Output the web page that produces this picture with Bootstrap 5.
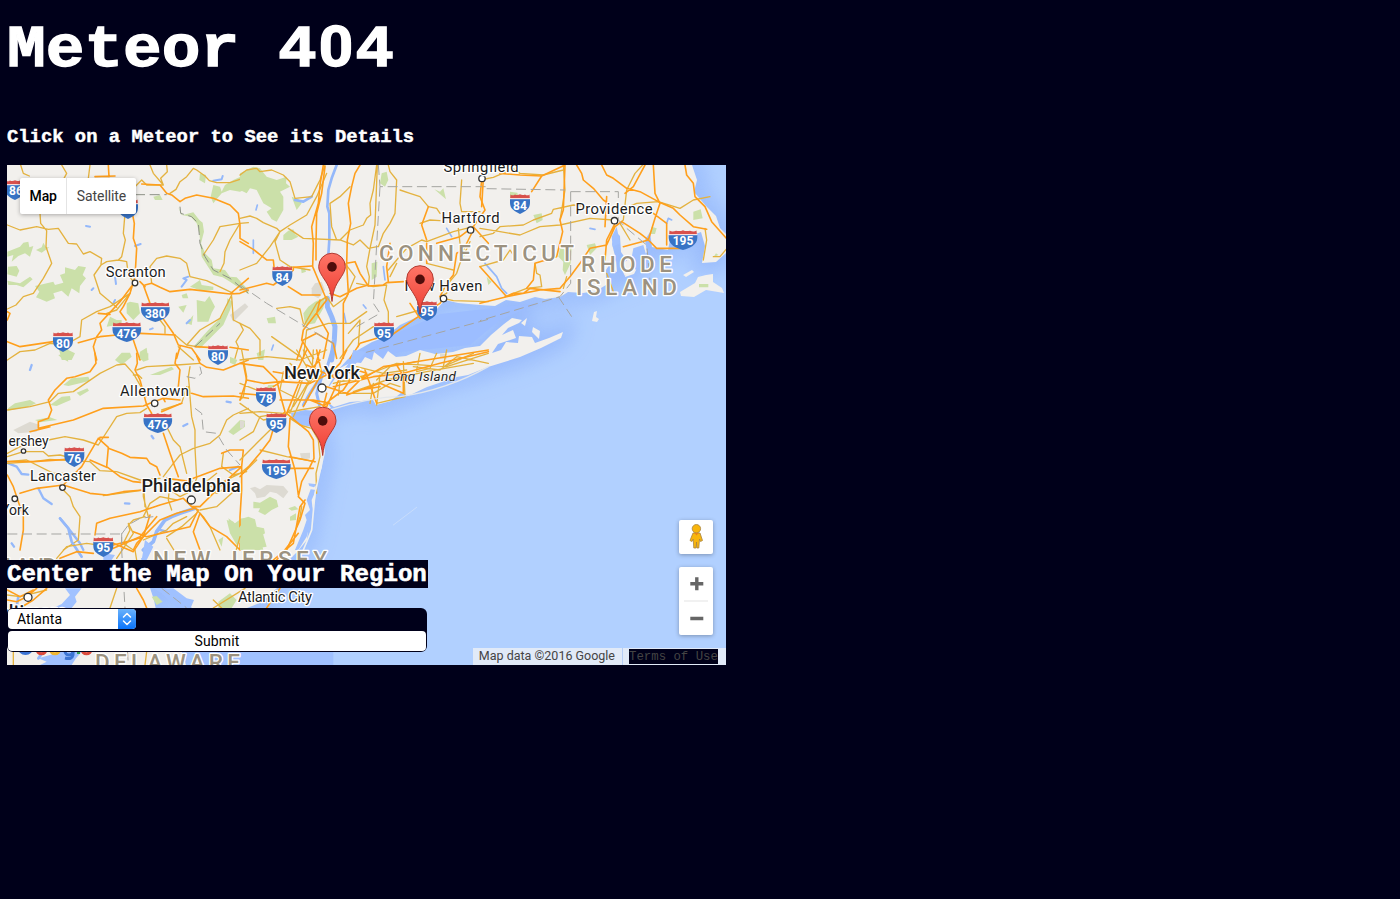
<!DOCTYPE html>
<html lang="en">
<head>
<meta charset="utf-8">
<meta name="viewport" content="width=device-width, initial-scale=1">
<title>Meteor 404</title>
<link rel="stylesheet" href="https://cdn.jsdelivr.net/npm/bootstrap@5.3.0/dist/css/bootstrap.min.css">
<style>
  body { background:#00001a; color:#fff; font-family:"Liberation Mono","Courier New",monospace; padding:0 7px; overflow:hidden; }
  h1 { font-size:64.5px; line-height:72px; padding-top:14px; margin:0; -webkit-text-stroke:1.4px #fff; transform:scaleY(.91); transform-origin:0 61px; }
  h1 .zero { display:inline-block; width:38.7px; text-align:center; font-family:Roboto,sans-serif; font-size:60px; line-height:1; }
  h3 { font-size:18.85px; line-height:22px; margin:40px 0 17px; -webkit-text-stroke:.45px #fff; }
  h1, h3, h2 { font-weight:700; white-space:nowrap; }
  .map-box { width:719px; height:500px; font-family:Roboto,sans-serif; overflow:hidden; background:#b0cfff; }
  .map-art { display:block; width:719px; height:500px; }
  .map-type { top:13px; left:13px; height:36px; font-size:14px; border-radius:2px; box-shadow:0 1px 4px rgba(0,0,0,.3); background:#fff; }
  .map-type button { border:0; background:none; padding:0 9.5px; color:#444; letter-spacing:-.1px; }
  .map-type .on { color:#000; font-weight:500; border-right:1px solid #e4e4e4; }
  .ctl { background:#fff; width:34px; right:13px; border-radius:2px; box-shadow:0 1px 4px rgba(0,0,0,.3); }
  .ctl svg { display:block; }
  .man { top:355px; height:34px; } .zoomer { top:402px; height:68px; }
  .credit { right:0; bottom:0; height:17px; font-size:12.5px; color:#444; line-height:16px; }
  .credit span { background:rgba(245,245,245,.7); padding:0 7px 0 6px; }
  .credit .terms { border-left:1px solid #b5cdf5; padding:1px 8px 0 6px; }
  .terms a { display:block; background:#00001a; color:#444; font:12.35px/16px "Liberation Mono",monospace; text-decoration:none; height:15px; width:89px; white-space:nowrap; }
  .region { left:0; top:395px; width:421px; }
  .region h2 { background:#00001a; font-family:"Liberation Mono","Courier New",monospace; font-size:24.13px; line-height:28px; height:28px; margin:0 0 20px; padding-top:1px; -webkit-text-stroke:.6px #fff; }
  .region form { background:#00001a; width:420px; height:44px; border-radius:6px; padding:1px; color:#000; font:14px/20px Roboto,sans-serif; }
  .city { width:128px; height:20px; border-radius:4px; background:#fff; border:0; text-align:left; padding:0 0 0 9px; color:#000; overflow:hidden; letter-spacing:.1px; }
  .city svg { width:18px; height:20px; background:linear-gradient(#6ab2fb,#0a74fb); }
  .send { width:418px; height:20px; margin-top:2px; border:0; border-radius:4px; background:#fff; color:#000; letter-spacing:.1px; }
  .r path { fill:none; stroke-linejoin:round; stroke-linecap:round; }
  .r .m { stroke:#ff9f1c; stroke-width:4.8; }
  .r .s { stroke:#e4b23f; stroke-width:4; }
  .r .d { stroke:#a5a5a2; stroke-width:3; stroke-dasharray:30 14; stroke-linecap:butt; }
  .r .p { fill:#cbe0a9; } .r .w { fill:#a0c1ff; } .r .g { fill:#dddad2; } .r .l { fill:#f2f0ed; }
  .riv { stroke:#94b8fa; }
  .lbl text { font-size:14.8px; fill:#1d1d1d; text-anchor:middle; paint-order:stroke; stroke:#fff; stroke-width:2.6px; stroke-linejoin:round; }
  .lbl .big { font-size:18.3px; font-weight:500; }
  .lbl .st { font-size:22.5px; fill:#9c9280; font-weight:500; text-anchor:start; }
  .lbl circle { fill:#fff; stroke:#333; stroke-width:1.3; }
  .sh text { font-size:12px; font-weight:700; fill:#fff; text-anchor:middle; }
</style>
<script src="https://cdn.jsdelivr.net/npm/bootstrap@5.3.0/dist/js/bootstrap.bundle.min.js"></script>
</head>
<body>
<h1>Meteor 4<span class="zero">0</span>4</h1>
<h3>Click on a Meteor to See its Details</h3>
<main class="map-box position-relative">
<svg class="map-art" viewBox="7 165 719 500">
  <defs>
    <filter id="soft" x="-20%" y="-20%" width="140%" height="140%"><feGaussianBlur stdDeviation="10"/></filter>
    <linearGradient id="pinFill" x1="0" y1="0" x2="0" y2="1"><stop offset="0" stop-color="#fd7567"/><stop offset="1" stop-color="#ee3d32"/></linearGradient>
    <g id="pin"><path d="M0 0C-1.4-14-5-18-9.5-25C-12-29-13.3-31.500-13.300-35A13.300 13.300 0 0 1 13.300-35C13.300-31.500 12-29 9.500-25C5-18 1.400-14 0 0Z" fill="url(#pinFill)" stroke="#b23a30" stroke-width="1"/><circle cy="-34.600" r="4.800" fill="#4f0d0b"/></g>
    <g id="sn"><path d="M-9.500-9.500Q-7.500-7.800-5-9.500Q-2.500-8.300 0-9.800Q2.500-8.300 5-9.500Q7.500-7.800 9.500-9.500L9.900-4.500H-9.900Z" fill="#d8504c"/><path d="M-10-5H10V-1C10 5 5 7.500 0 10C-5 7.500-10 5-10-1Z" fill="#3873c5"/><path d="M-10-5.300H10" stroke="#fff" stroke-width="1"/></g>
    <g id="sw"><path d="M-13.500-9.500Q-11-7.800-7-9.300Q-3-8.300 0-9.800Q3-8.300 7-9.300Q11-7.800 13.500-9.500L14-4.500H-14Z" fill="#d8504c"/><path d="M-14.300-5H14.300V-2C14 5 7 8 0 10C-7 8-14 5-14.300-2Z" fill="#3873c5"/><path d="M-14.300-5.300H14.300" stroke="#fff" stroke-width="1"/></g>
    <path id="main" d="M7 165H692L697 180L694 192L706 206L716 216L720 228L726 234V253L716 262L702 263L705 246L701 232L690 236L670 240L668 250L652 247L650 232L645 240L647 252L640 262L634 274L625 277L628 262L621 252L620 236L616 232L612 244L615 256L606 270L606 285L596 291L583 293L568 292L560 297L545 299L535 297L520 302L506 300L495 306L480 305L458 303L445 300L436 310L415 318L400 325L385 337L372 342L358 350L347 360L338 370L329 385L326 400L331 408L318 411L305 410L291 413L292 420L301 425L314 427L318 430L319 436L323 450L322 467L317 482L315 500L309 520L307 540L297 552L289 560L281 572L277 588L262 602L247 608L240 625L225 635L215 640L200 622L192 608L183 599L170 590L157 585L150 573L143 558L141 558L148 582L154 600L158 620L168 640L182 652L186 665H7Z"/>
    <path id="li" d="M326 391L334 380L340 368L352 362L361 363L365 357L372 360L374 352L383 359L388 351L396 357L406 356L420 350L435 354L453 352L465 348L480 346L491 335L504 324L512 318L522 320L519 323L508 328L502 335L513 330L516 338L498 344L492 353L501 350L506 342L518 343L519 336L532 337L535 343L549 338L563 332L561 338L541 348L520 357L488 367L468 375L457 377L427 387L408 396L402 392L391 401L376 405L373 400L350 402L334 407L326 401Z"/>
  </defs>
  <rect x="7" y="165" width="719" height="500" fill="#b1d0ff"/>
  <g filter="url(#soft)" fill="none" stroke="#93b5fb" stroke-width="18" opacity=".8"><use href="#main"/><use href="#li"/></g>
  <path d="M340 370L372 344L440 314L540 303L500 320L470 345L400 352L350 366Z" fill="#9cbdff"/>
  <g fill="#f2f0ed"><use href="#main"/><use href="#li"/>
    <path d="M680 292L695 283L698 277L706 275L713 274L713 282L722 288L724 293L706 290L694 297L681 296Z"/><path d="M683 275L692 270L694 272L686 277ZM612 270L616 260L617 272ZM620 266L630 258L632 268L625 276ZM594 312L597 311L596 317L599 319L597 322L592 321ZM533 327L540 331L539 339L532 332ZM521 323L527 318L525 326Z"/>
  </g>

  <g transform="translate(0 160) scale(.33333)" class="r">
    <path class="p" d="M22 275L60 260L70 248L85 245L88 262L100 258L90 290L75 280L55 288L35 305L40 285L22 290ZM108 270L125 262L130 248L138 262L148 262L125 278ZM24 320L50 318L58 332L50 350L22 343ZM22 362L60 370L90 350L98 358L70 382L50 375L25 375ZM105 378L160 365L165 375L190 368L180 345L195 340V322L225 330L235 318L258 322L248 345L258 355L240 378L238 400L215 385L205 410L185 392L160 400L165 415L140 425L108 412L118 395ZM380 430L390 425L415 430L420 460L400 480L380 460ZM330 470L350 480L365 480V510L350 495L320 500ZM590 420L615 425L628 408L645 440L635 458L625 485L592 485ZM535 440L560 435L550 458ZM545 405L560 400L565 415H548ZM570 380L600 360L605 375L640 380L640 390L605 392ZM560 490L580 465L575 495ZM580 560L625 510L665 470L680 440L682 415L698 425L690 450L670 495L635 530L600 565ZM600 40L618 45L615 70L598 60ZM640 75L660 80L665 95L675 75L700 60L745 40V85L720 95L690 90L665 100L640 130L632 110ZM175 560L200 550L205 570L225 580L215 600H185ZM420 575L440 563L445 600H415ZM460 110L480 105L488 120L465 120Z"/>
    <path class="p" d="M534 140L548 165L580 157L598 180L608 188L612 215L603 250L615 280L635 300L640 325L675 330L690 350L710 352L745 390V402L690 365L668 352L640 345L605 290L598 220L590 190L572 170L545 165Z"/>
    <path class="g" d="M690 465L735 430L745 440L700 485Z"/>
    <path class="riv" stroke-width="6" d="M545 380L560 360L550 355L565 350M258 198L270 200M640 62L665 58L668 48M275 390L280 385M345 350L348 372M405 258L422 252M560 490L570 480M450 508L458 505M345 420L340 430"/>
    <path class="s" d="M62 15L70 40L88 48M185 15L200 40L192 55M270 15L265 55M22 195L60 210L110 200L145 208L175 205L205 250L230 252L250 282L270 275L305 295L303 312M120 160L122 190L140 212L138 260L155 310L130 355L100 400L70 410L48 435L22 447M405 80L425 60L440 75L490 75L460 40L450 15M375 160L370 220L376 240L365 290L355 300L320 305L303 315L282 345L300 400L350 442M355 300L380 305L385 345L400 365M455 370L450 320L470 295L500 288L540 295L560 310L570 350L620 362L700 400M500 15L502 35L482 55L490 75M610 285L640 240L660 200L720 190L745 188M720 190L690 240L675 275L672 310L660 335M510 100L528 88L540 65L560 50L580 25L590 30L615 48L628 62L650 68L690 68L745 50M22 600L60 575L105 570L150 550L195 555L240 530L245 480L290 455L330 440L390 400M525 525L560 555L590 560M480 480L495 500V520M560 555L600 510L660 475L695 405M535 560L580 600M705 595L715 560L708 545L730 510L720 490L700 480L695 410M390 400L350 450L320 460"/>
    <path class="m" d="M325 15L327 50M285 50L345 48M398 165L403 190L400 235L410 265L405 350L390 400L370 440M430 375L450 430M485 470L520 520L535 555L575 565L600 600M435 375L455 370L480 382L510 395L570 388L630 395L690 402L720 400L745 390M420 365L435 380M405 365L360 425L300 490L305 510L290 530L280 560L290 600M295 460L330 463M370 440L360 455L378 480M540 125L515 105L500 100L480 75L425 72M540 125L555 115L590 105L640 115L690 135L715 160L720 195L720 235L745 250M690 402L745 355M22 545L60 560L160 545M235 548L300 530L350 525M420 520L525 525M625 562L585 560M690 562L745 570M22 455L30 460L22 480M400 540L420 600M530 595L540 560"/>
    <path class="d" d="M405 104H500M540 140L542 160L575 170L595 190L600 250L615 290L640 330L690 355L745 400M585 560L660 490" style="stroke:#8d9187"/>
  </g>

  <g transform="translate(240 160) scale(.33333)" class="r">
    <path class="p" d="M0 40L40 20L60 25L80 50L110 60L140 50L138 70L150 80L120 95L130 110V150L110 185L95 178L80 155L95 145L70 130L50 90L30 85L20 100L0 90ZM130 225L145 212L160 208L165 222L175 230L155 240L130 240ZM190 460L205 440L225 425L255 412L250 445L235 470L225 490L195 495ZM583 88L600 95L610 85L618 118ZM80 475L105 470L108 490H85ZM395 310L412 305L410 350L395 360ZM155 110L175 118L185 130L170 150ZM425 40L440 35L445 60L435 80L420 70ZM50 580L75 568L70 600H55ZM183 325L195 325L198 335L185 340Z"/>
    <path class="g" d="M215 385L225 370L245 365L255 390L235 415L215 405Z"/>
    <path class="riv" stroke-width="8" d="M165 120L190 125L215 110M290 15L275 55L265 90L262 140L268 160V240L265 285"/>
    <path class="riv" stroke-width="15" d="M262 415V440L275 470L285 500L283 540L275 600"/>
    <path class="riv" stroke-width="5" d="M40 240V280M430 320L435 360M620 205L635 230M370 435L378 445M100 555L95 570M52 135L48 150M312 460L318 490"/>
    <path class="s" d="M0 45L20 30L50 25L60 35L95 30L130 45L150 65L165 115L215 110L230 80L240 60L255 15M0 175L30 168L50 175L70 188L110 205L120 215L90 260L50 310L0 330M120 215L105 245L120 300L150 320L210 330M120 215L150 195L200 165L230 110L260 40M145 205L190 235L300 240L340 255L360 240L385 265L412 260M300 240L330 210L370 195L380 175L392 165L390 130L400 90L410 15M330 80L300 110L270 130L275 200L290 240M350 370L400 380L440 375L432 420L445 455V495M385 378L388 350L380 320L390 265L405 195L412 15M445 15L450 35L470 60L465 160L450 190L430 220L415 260M480 90L510 100L540 110L565 140L590 145L600 160M540 190L570 180L600 182M545 240L500 265L470 300L445 330M545 240L560 245L640 215L700 200M665 60L660 130L665 155L720 155M560 270V310L620 325L640 330M655 205L660 250M600 410L620 400L625 370L650 340L660 310L690 245M60 585L60 540L30 505L0 490M95 530L180 590M190 500L230 430L260 410L280 440L320 410L345 350L315 310M190 595L200 510L265 490L330 490L380 455M325 520L360 480L355 560M300 595L340 540L400 500M470 470L540 450M610 415L640 422L745 425M110 445L150 440L180 447L190 490M470 310L450 350"/>
    <path class="m" d="M250 15L240 75L235 130L215 200L220 250L218 320L235 360L260 420M255 20L245 100L230 160L228 250V300M360 15L345 40L335 80L325 130L332 190L322 240L320 310L325 400L310 430V595M260 420L190 510L185 540L220 595M0 390L80 370L100 375L160 330L160 322L215 318M0 245L40 268L80 300H100L102 320M145 380L185 405H240M320 310L345 305L360 340L385 378L430 375L440 368L490 365M560 240L545 195L565 140M560 250V310M725 60L720 110L735 150L700 200M590 250L660 230L700 200L745 250M700 210L670 270L650 280L640 345L620 370L600 410M445 365L440 320L450 250M270 400L300 410L350 385L385 375M240 420L230 460L265 520L250 595M330 595L360 550L410 535M455 525L535 470L600 430L610 415M510 430L540 475M290 595L280 550L230 520L190 540L170 600"/>
    <path class="d" d="M415 15L420 80H745M420 80L400 430L420 460L350 500M0 375L80 430L280 550M375 578L745 478"/>
  </g>

  <g transform="translate(480 160) scale(.33333)" class="r">
    <path class="p" d="M160 165L185 160L188 180L170 190ZM640 155L662 148L668 175L640 180ZM240 265L262 270L275 255L272 310L255 345L248 330L250 305L235 290ZM320 255L345 250L350 265L330 285ZM515 200L530 205L525 222H510ZM657 372H685V382H657ZM90 95L112 98L115 110L90 120ZM20 350L35 365L25 375ZM708 280L715 285L700 292Z"/>
    <path class="w" d="M410 200L420 250L398 260L395 230ZM460 265L490 255L500 290L470 330L450 320Z"/>
    <path class="riv" stroke-width="5" d="M15 310L50 350L65 385L80 400M330 205L345 208M560 190L565 175L575 180"/>
    <path class="s" d="M85 15L120 40L190 45L250 30M0 60L40 52L80 35M0 230L40 220L60 200L130 195L160 180L215 160L220 148L280 135L340 140M0 205L60 215L120 225L180 200L240 195L330 175L400 180M250 15L255 90L240 180M488 15L465 40L440 90L430 180L420 190L450 240M410 155L470 130L535 125L600 145L640 120L690 110M670 300L680 240L675 205M700 290L720 290L745 260M0 320L70 300L90 270L110 300M165 310L170 340L180 345L185 380L140 385L75 410M250 385L260 350M380 340L400 395"/>
    <path class="m" d="M60 40L120 45L185 48L255 15L250 150L240 180L248 215L230 290L165 310L160 360L140 385M185 48L155 95M290 15L305 40L310 60L340 85L370 120L385 130M365 15L380 45L400 55L440 85L480 95L535 125L580 145L600 165L640 200L680 208M495 15L460 80L435 100M520 15L525 100L540 130L525 175L505 240L430 260M615 15L620 45L640 70L645 110L675 140L695 185L739 235M425 185L480 220L505 240L530 265L600 265M425 185L405 200L380 255L330 265L300 310L270 350L240 385L180 390L80 410L0 430M380 110L375 200M560 255V190L520 160M80 410L0 320M10 55L5 140M405 190L380 240L375 300M80 410L100 400L130 400L150 385L240 395"/>
    <path class="d" d="M20 86L255 90M272 95H415V180L440 205L500 255L510 360M272 95V370L240 410L0 482M235 410L275 470"/>
  </g>

  <g transform="translate(0 350) scale(.33333)" class="r">
    <path class="g" d="M40 240L90 215L120 225L110 245L55 250Z"/>
    <path class="p" d="M24 175L45 160L90 150L108 160L85 170L24 182ZM190 105L215 85L265 80L270 92L240 100L205 108ZM150 165L185 140L210 138L212 150L170 168ZM230 128L262 115L267 122L240 138ZM105 210L150 202L172 210L120 217ZM345 30L365 8H390L395 20L365 45ZM450 75L515 50L522 58L480 75ZM425 10H445V30L430 35L420 25ZM685 245L720 210L735 212L735 230L700 255ZM685 505L705 520L725 505L745 505V570L720 580L710 562L700 555ZM655 570L670 560L665 590ZM175 15L200 10L205 35L185 25ZM690 20L712 30L705 45L690 38Z"/>
    <path class="riv" stroke-width="7" d="M25 340L50 350L65 372L85 374M115 415L130 445L155 462M180 505L205 535L240 580L250 600M680 155L692 157M455 258L460 265M375 460L388 461M550 228L562 222M95 45L90 60M480 540L500 545M35 580L42 590M690 360L715 350"/>
    <path class="riv" stroke="#8da6d5" stroke-width="11" d="M585 475L540 490L515 500L495 510L470 545L460 575L430 600"/>
    <path class="s" d="M22 180L90 170L150 155L175 130L220 125L300 70L350 45L375 42L400 70L440 140M410 60L440 50L530 45L600 40M22 310L60 290L100 285L145 270L195 260L250 270L295 285L350 200L380 190L420 188L440 175M22 320L70 305L130 305L145 318L180 315L230 328M20 335L80 330L160 370L200 370M22 340L100 335L150 328L270 335L300 362L350 365L420 390L480 385M310 437L430 420M190 420L210 440L220 470L240 500L235 570L190 600M400 75L415 75L425 85M500 230L520 270L540 290L550 330L560 370M565 110L570 140L575 200L585 240V295L590 385L580 410M490 380L520 340L540 315L580 295L630 280L660 255L680 210L700 195L745 175M570 50L565 80L570 130M560 110L545 160L485 180M670 310L665 350L700 375L740 365M510 390L505 450L515 480M430 415L430 440L445 500M435 500L400 510L385 525L390 540L370 580L400 600M600 410L650 430L700 400M530 450L480 440L450 460L430 500M590 480L610 500L630 530L660 600M560 500L520 520L500 540L430 570M430 395L435 470M550 405L640 410L720 370L745 350M510 420L540 440L600 410L650 370M700 425L650 470L600 480M500 560L545 530L590 490"/>
    <path class="m" d="M285 10L288 40L270 65L225 80L200 85L165 120L145 150L155 180L145 205L115 215V235L220 210L310 175L430 168L450 160L490 145L540 150M90 245L150 230M410 10L412 40L405 60L420 90L440 165L455 190M490 250L510 310L535 380M545 160L485 185M745 145L700 138L610 140L575 130M530 10L525 40L540 60L535 110M22 335L100 335L200 328M22 375L40 410L70 500V540L60 600M60 430L110 415L190 405L270 430L320 435L370 425L430 420M190 405L245 350L295 265L325 292L320 350L360 380L400 395L430 398M480 375L470 350L450 340L440 325L390 322L365 310L325 295M270 330L320 352M295 265L310 262M300 262L325 262M665 310L690 300H730L725 350L670 400L600 470L575 470M285 555L290 520L330 505L420 485L480 465L550 445L575 470L595 480L570 530L440 560L400 545M600 490L630 530L680 560L720 600M600 490L580 545L600 600M340 585L400 570L430 560M490 145L495 155M580 385L660 355L725 350M585 475L530 490L480 510L410 580L400 600M590 18L600 40L620 52L670 60L745 30M725 350V420L720 500V600M450 495L430 560M575 395L500 385"/>
    <path class="d" d="M22 552H365V600M365 552L385 525L420 505L460 500M600 50L605 70L585 85L560 80M585 175L605 190L610 245L650 250L680 300L720 345"/>
  </g>

  <g transform="translate(240 350) scale(.33333)" class="r">
    <path class="g" d="M30 415L45 410L60 418L80 405L130 408L145 425L130 445L110 430L90 425L75 440L50 445L45 430ZM0 210L15 215L10 235H0ZM180 310L210 308L210 325L185 330ZM600 10L620 12V28L600 25Z"/>
    <path class="p" d="M40 455L60 458L90 440L110 450L115 470L95 480L75 495L55 485L60 475L40 475ZM145 475L165 468L175 478L155 482ZM0 545L10 505L25 500L45 508L50 530L72 535L75 550L60 560L70 600H0ZM150 500L168 490V510L150 512ZM85 105L105 105L95 115H80Z"/>
    <path class="w" d="M160 195L215 197L230 225L190 225L165 212ZM205 400L230 403L222 412L208 408ZM212 418L228 420L215 450L218 480L208 530L200 560L175 600H165L190 540L200 510L195 495L210 480L200 450ZM340 0L380 5L325 65L310 60L330 35Z"/>
    <path class="riv" stroke="#9eaecb" stroke-width="9" d="M275 5L262 50L210 130L190 165M250 65L230 130L238 165"/>
    <path class="s" d="M0 30L80 20L180 30L260 0M0 100L50 120M150 180L100 230L50 280L0 330M60 300L140 320L225 335M5 0L20 80L10 140L0 150M170 0L200 50L180 110L150 190M190 0L230 70L200 110L160 200M0 190L60 185L130 190L180 180L240 170M10 370L50 330M220 0L215 80L160 170M150 205L180 225L215 235L235 270L240 320L228 370L230 430M0 270L40 245L60 200L90 195M410 160L495 140L490 35M520 50L600 60L650 20L745 40M280 100L380 75L470 40L620 50L745 10M340 125L440 90L560 65L700 40M400 100L390 160M420 75L410 165M350 50L430 70L500 60M540 10L530 60M590 10L570 55L530 65M620 0L610 50L700 10M300 130L400 130L450 100L480 110M0 160L70 210L140 195M130 65L120 120L180 150M150 40L210 100M350 90L300 95L295 135M530 35L450 50L410 90M185 470L180 500L170 530"/>
    <path class="m" d="M0 40L70 50L110 90L125 150L135 185L105 220L90 270L60 310L0 380M10 40L20 90L0 150M20 90L70 100L120 95L210 100L270 70L300 40L320 0M240 0L225 50L180 90L140 190L175 220L205 245L220 270L222 325L210 350L185 395L175 440L195 460L180 510L140 600M175 435L165 360L145 290L150 205M150 355H220M100 110L170 65L200 0M260 130L250 170L270 150L310 120L350 60L380 70L320 130L260 110M270 80L310 60L370 85L430 50L500 40L620 20L745 0M280 110L400 80L490 70L600 40L745 5M320 135L420 100L490 130V70M360 120L420 110M100 65L190 80L240 30M0 130L55 135M150 320L225 335M200 45L300 90M210 150L260 170L310 60M230 0L245 70L190 170M120 150L220 150L270 160M375 60L410 160M470 45L500 95"/>
    <path d="M270 180Q400 140 480 140Q620 120 745 50" stroke="#e3e7ec" stroke-width="4"/>
    <path d="M460 525L530 472" stroke="#c8dcfb" stroke-width="3"/><path d="M250 240L252 310L225 430L215 540L190 600" stroke="#eef0f0" stroke-width="5"/>
  </g>

  <g transform="translate(0 400) scale(.33333)" class="r">
    <path class="w" d="M195 565H245L225 590L230 605L215 624H160L185 612L210 585ZM310 460L345 465L335 480H310ZM115 775L150 765L185 750H250L228 775L215 795H120L140 785ZM435 420L460 440L440 480H425ZM460 565H520L560 595L582 600L572 624H530L485 580ZM560 755H1000V795H620L590 775Z"/>
    <path class="p" d="M455 590L470 588L488 605L470 615ZM655 605L690 580L710 600L695 624H655ZM680 360L700 365L712 390L735 360L762 365L770 385L790 405L800 440L770 445L730 420L710 435L690 400Z"/>
    <path class="riv" stroke-width="8" d="M180 355L205 385L215 425L245 470M55 590L50 620M130 755L115 775"/>
    <path class="s" d="M170 475L200 440L260 430L330 440M385 370L400 400L380 430L350 475M405 450L410 480M350 565L330 624M440 755L435 795M640 600L665 624M40 755V795M735 565L640 624M500 415L540 480M700 480L720 410M22 585L60 590L140 570"/>
    <path class="m" d="M22 570L60 590L100 570M22 600L50 605L80 590L110 565M60 624L100 600L140 565M410 565L430 600L440 624M340 445L420 410L470 350M820 480L880 430L900 320L915 300M830 480L895 400M180 475L230 455L280 460M340 430L400 455L430 410M800 624L840 565"/>
    <path class="d" d="M365 400V450L375 624L385 795M485 565L530 600L560 624"/>
  </g>

  <g class="lbl">
    <text class="st" x="379" y="261" textLength="195">CONNECTICUT</text><text class="st" x="581" y="272" textLength="91">RHODE</text><text class="st" x="576" y="294.500" textLength="101">ISLAND</text>
    <text class="st" x="153" y="567" textLength="174">NEW JERSEY</text><text class="st" x="95" y="670" textLength="145">DELAWARE</text><text class="st" x="-50" y="574" textLength="107">MARYLAND</text>
    <circle cx="482" cy="178.500" r="3.200"/><circle cx="470.600" cy="230" r="3.200"/><circle cx="614.500" cy="220.700" r="3.200"/><circle cx="135" cy="283" r="2.800"/><circle cx="443.500" cy="298.600" r="3.200"/><circle cx="154.700" cy="403.300" r="3.200"/><circle cx="23.500" cy="451" r="2.200"/><circle cx="62.500" cy="487.600" r="2.800"/><circle cx="14.800" cy="498.800" r="2.800"/><circle cx="28" cy="597.300" r="4"/><circle cx="322" cy="388" r="4"/><circle cx="191.300" cy="500" r="4"/>
    <text x="481" y="171.500" textLength="75">Springfield</text><text x="470.500" y="222.700" textLength="58">Hartford</text><text x="614" y="213.500" textLength="77">Providence</text><text x="135.700" y="276.800" textLength="60">Scranton</text><text x="443.500" y="291.300" textLength="78">New Haven</text><text x="154.500" y="395.800" textLength="69">Allentown</text>
    <text x="28.500" y="445.600" textLength="40" style="font-size:14px">ershey</text><text x="63" y="481.300" textLength="66">Lancaster</text><text x="15" y="514.500" style="font-size:14px">York</text><text x="275" y="602" textLength="74">Atlantic City</text><text x="420.500" y="381.300" textLength="71" style="font-style:italic;font-size:13.500px;stroke-width:1px">Long Island</text>
    <text class="big" x="322" y="379" textLength="76">New York</text><text class="big" x="191" y="492" textLength="99">Philadelphia</text><text class="big" x="27" y="618">Baltimore</text>
  </g>
  <g class="sh">
    <use href="#sn" x="15" y="190"/><use href="#sn" x="128" y="209"/><use href="#sw" x="155.300" y="312"/><use href="#sw" x="126.800" y="332"/><use href="#sn" x="63" y="342"/><use href="#sn" x="218" y="355"/><use href="#sn" x="282.300" y="276"/><use href="#sn" x="520" y="204"/><use href="#sw" x="683" y="240"/><use href="#sn" x="427" y="311"/><use href="#sn" x="384" y="332"/><use href="#sn" x="266" y="397"/><use href="#sn" x="276.300" y="423"/><use href="#sw" x="157.800" y="423"/><use href="#sn" x="74.300" y="457"/><use href="#sw" x="276.300" y="469"/><use href="#sn" x="103.300" y="547"/>
    <text x="16" y="194.800">86</text><text x="155.300" y="317.500">380</text><text x="126.800" y="337.500">476</text><text x="63" y="347.700">80</text><text x="218" y="360.500">80</text><text x="282.300" y="281.500">84</text><text x="520" y="209.700">84</text><text x="683" y="245.300">195</text><text x="427" y="316">95</text><text x="384" y="337.500">95</text><text x="266" y="402.500">78</text><text x="276.300" y="428.700">95</text><text x="157.800" y="428.500">476</text><text x="74.300" y="462.700">76</text><text x="276.300" y="475">195</text><text x="103.300" y="551.700">95</text>
  </g>
  <use href="#pin" x="332" y="301.500"/><use href="#pin" x="420" y="314"/><use href="#pin" x="322.700" y="455.500"/>
  <g fill="none" stroke-width="3"><g stroke="#3c74d4"><circle cx="25.500" cy="647" r="6.500"/><circle cx="69" cy="651" r="4"/><path d="M73 648V655Q72 660 65 658"/></g><circle cx="41.500" cy="649" r="4.800" stroke="#dc4a3d"/><circle cx="55" cy="649" r="4.800" stroke="#f0b62f"/><path d="M78.500 640V654" stroke="#37a058"/><circle cx="86.500" cy="649" r="4.800" stroke="#dc4a3d"/></g>
</svg>

<div class="map-type position-absolute d-flex"><button class="on">Map</button><button>Satellite</button></div>
<div class="ctl man position-absolute"><svg width="34" height="34" viewBox="0 0 34 34"><g fill="#f8b50c" stroke="#a78340" stroke-width=".8" stroke-linejoin="round"><path d="M14 13H21L23.500 20.500L21.500 21.500L20.500 19L19.800 28H17.900L17.500 22L17.100 28H14.800L14.200 19L13 21.500L11 20.500Z"/><circle cx="17.400" cy="8.700" r="4.200"/></g><path d="M15.500 13L17.500 15.500L19.500 13Z" fill="#e8821b"/></svg></div>
<div class="ctl zoomer position-absolute"><svg width="34" height="68" viewBox="0 0 34 68"><path d="M11.300 16.700H24.300M17.800 10.200V23.200M11.300 51.500H24.300" stroke="#666" stroke-width="3.400"/><path d="M5 34H29" stroke="#e3e3e3"/></svg></div>
<div class="credit position-absolute d-flex"><span>Map data ©2016 Google</span><span class="terms"><a href="#">Terms of Use</a></span></div>

<section class="region position-absolute">
  <h2>Center the Map On Your Region</h2>
  <form>
    <button type="button" class="city d-flex justify-content-between">Atlanta<svg viewBox="0 0 18 20"><path d="M5.500 8L9 4.500L12.500 8M5.500 12L9 15.500L12.500 12" fill="none" stroke="#fff" stroke-width="1.500" stroke-linecap="round" stroke-linejoin="round"/></svg></button>
    <button type="button" class="send d-block p-0">Submit</button>
  </form>
</section>
</main>
</body>
</html>
